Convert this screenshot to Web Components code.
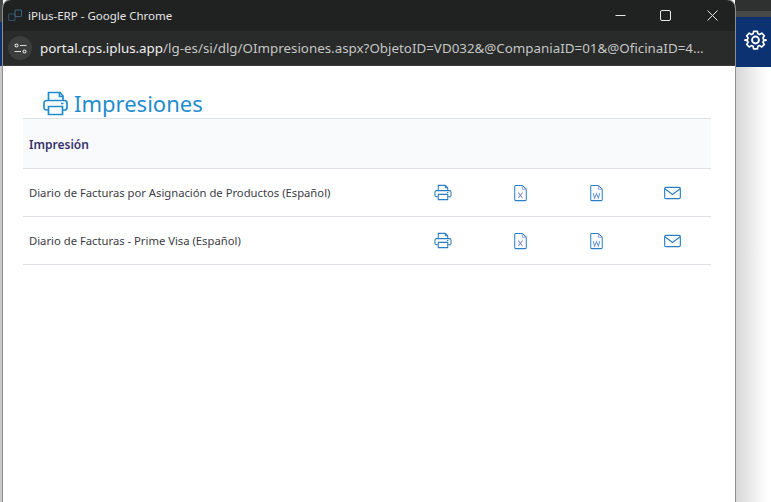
<!DOCTYPE html>
<html lang="es">
<head>
<meta charset="utf-8">
<title>iPlus-ERP</title>
<style>
    html, body { margin: 0; padding: 0; height: 100%; overflow: hidden; background: #fff; }
</style>
</head>
<body>

<x-desktop>
    <x-window title="iPlus-ERP - Google Chrome" host="portal.cps.iplus.app" path="/lg-es/si/dlg/OImpresiones.aspx?ObjetoID=VD032&amp;@CompaniaID=01&amp;@OficinaID=4...">
        <x-heading>Impresiones</x-heading>
        <x-report-table label="Impresión">
            <x-report-row>Diario de Facturas por Asignación de Productos (Español)</x-report-row>
            <x-report-row>Diario de Facturas - Prime Visa (Español)</x-report-row>
        </x-report-table>
    </x-window>
</x-desktop>

<script>
const ICONS = {
    print: `<svg width="18" height="17" viewBox="0 0 19 17" fill="none" stroke="currentColor" stroke-width="1.1">
        <path d="M4.500 6.500V1h7.500l2.500 2.500v3"/><path d="M12 1v2.500h2.500"/>
        <path d="M4.500 13H2.600A1.600 1.600 0 0 1 1 11.400V8.100A1.600 1.600 0 0 1 2.600 6.500h13.800A1.600 1.600 0 0 1 18 8.100v3.300a1.600 1.600 0 0 1-1.600 1.600h-1.900"/>
        <path d="M4.500 10.500h10V16h-10z"/><path d="M13.600 8.500h1.600"/></svg>`,
    excel: `<svg width="13" height="18" viewBox="0 0 14 18" fill="none" stroke="currentColor" stroke-width="1.1">
        <path d="M1.500 .8h7.500l4.200 4.200v11a1.200 1.200 0 0 1-1.200 1.200H1.500A1.200 1.200 0 0 1 .8 16V2A1.200 1.200 0 0 1 1.500 .8z"/>
        <path d="M9 .8V5h4.200" stroke="#a9a3d6"/><path d="M4.600 8.400l4.600 6M9.200 8.400l-4.600 6" stroke="#7d86c8"/></svg>`,
    word: `<svg width="13" height="18" viewBox="0 0 14 18" fill="none" stroke="currentColor" stroke-width="1.1">
        <path d="M1.500 .8h7.500l4.200 4.200v11a1.200 1.200 0 0 1-1.200 1.200H1.500A1.200 1.200 0 0 1 .8 16V2A1.200 1.200 0 0 1 1.500 .8z"/>
        <path d="M9 .8V5h4.200" stroke="#a9a3d6"/><path d="M3.400 9l1.600 5.600L7 9.600l2 5 1.600-5.600" stroke="#6d9ad6"/></svg>`,
    mail: `<svg width="17" height="14" viewBox="0 0 18 14" fill="none" stroke="currentColor" stroke-width="1.2">
        <rect x=".7" y="1" width="16.600" height="12" rx="1.400"/><path d="M1 2.500l8 6 8-6"/></svg>`
};

class Desktop extends HTMLElement {
    constructor() {
        super();
        this.attachShadow({ mode: 'open' });
    }
    connectedCallback() {
        this.shadowRoot.innerHTML = `
            <style>
                :host {
                    display: block;
                    position: relative;
                    width: 771px;
                    height: 502px;
                    overflow: hidden;
                    background: #fff;
                }
                .shade-right {
                    position: absolute;
                    left: 735px; right: 0; top: 67px; bottom: 0;
                    background: linear-gradient(to right, #d6d6d6, #e8e8e8 14px, #f7f7f7 26px, #fff 34px);
                }
                .shade-left {
                    position: absolute;
                    left: 0; width: 3px; top: 66px; bottom: 0;
                    background: #c9c9c9;
                }
                .app-bar {
                    position: absolute;
                    left: 735px; right: 0; top: 17px; height: 50px;
                    background: #0c3272;
                    color: #fff;
                }
                .app-bar svg { position: absolute; left: 9px; top: 11px; }
                .app-top {
                    position: absolute;
                    left: 735px; right: 0; top: 0; height: 17px;
                    background: linear-gradient(#2f3030 0, #2f3030 11px, #474848 11px);
                }
                .left-top {
                    position: absolute;
                    left: 0; width: 3px; top: 0; height: 66px;
                    background: linear-gradient(#4a4a4a 0, #4a4a4a 22px, #0c3272 22px);
                }
            </style>
            <div class="app-top"></div>
            <div class="left-top"></div>
            <div class="app-bar">
                <svg width="23" height="24" viewBox="0 0 24 24" fill="none" stroke="currentColor" stroke-width="2" stroke-linejoin="round">
                    <circle cx="12" cy="12" r="3.600"/>
                    <path d="M9.700 1.500h4.600l.6 3 2.100.9 2.600-1.700 3.100 3.100-1.700 2.600.9 2.100 3 .6v0l-3 .6-.9 2.100 1.700 2.600-3.100 3.100-2.600-1.700-2.100.9-.6 3H9.700l-.6-3-2.100-.9-2.600 1.700-3.100-3.100 1.700-2.600-.9-2.100-3-.6v0l3-.6.9-2.100-1.700-2.600 3.100-3.100 2.600 1.700 2.100-.9z" transform="translate(12 12) scale(.86) translate(-12 -12)"/>
                </svg>
            </div>
            <div class="shade-right"></div>
            <div class="shade-left"></div>
            <slot></slot>
        `;
    }
}

class BrowserWindow extends HTMLElement {
    constructor() {
        super();
        this.attachShadow({ mode: 'open' });
    }
    connectedCallback() {
        const title = this.getAttribute('title');
        const host = this.getAttribute('host');
        const path = this.getAttribute('path');
        this.shadowRoot.innerHTML = `
            <style>
                :host {
                    position: absolute;
                    left: 3px; top: 0;
                    width: 732px;
                    height: 520px;
                    display: flex;
                    flex-direction: column;
                    background: #fff;
                    border-radius: 8px 8px 0 0;
                    overflow: hidden;
                    box-shadow: 0 0 0 1px #8e8e8e;
                    font-family: "Noto Sans", "Open Sans", sans-serif;
                }
                .titlebar {
                    height: 31px;
                    flex: none;
                    display: flex;
                    align-items: center;
                    background: #202222;
                    color: #e6e6e6;
                    font-size: 11.500px;
                }
                .logo { margin: 0 6px 0 5px; display: block; }
                .caption { flex: 1; }
                .ctl { width: 46px; height: 31px; display: flex; align-items: center; justify-content: center; }
                .ctl.max { position: relative; left: -1px; }
                .toolbar {
                    height: 35px;
                    flex: none;
                    display: flex;
                    align-items: center;
                    background: #292a2a;
                    border-bottom: 1px solid #3a3b3b;
                    box-sizing: border-box;
                    font-size: 13.360px;
                    color: #c4c7c5;
                    white-space: nowrap;
                }
                .tune {
                    width: 24px; height: 24px;
                    margin: 0 8px 0 5px;
                    flex: none;
                    border-radius: 50%;
                    background: #3c3d3d;
                    display: flex; align-items: center; justify-content: center;
                }
                .host { color: #f0f0f0; }
                .content { flex: 1; padding: 0 24px 0 20px; min-height: 0; }
            </style>
            <div class="titlebar">
                <svg class="logo" width="14" height="13" viewBox="0 0 14 13" fill="none" stroke="#2f5068" stroke-width="1.100">
                    <rect x=".6" y="5" width="6.500" height="6.500" rx="1"/>
                    <rect x="7" y="1" width="6.500" height="6.500" rx="1" stroke="#38617e"/>
                </svg>
                <span class="caption">${title}</span>
                <span class="ctl"><svg width="11" height="11" viewBox="0 0 11 11"><path d="M.5 5.500h10" stroke="#e8e8e8"/></svg></span>
                <span class="ctl max"><svg width="11" height="11" viewBox="0 0 11 11" fill="none"><rect x=".5" y=".5" width="10" height="10" rx="1.500" stroke="#e8e8e8"/></svg></span>
                <span class="ctl"><svg width="11" height="11" viewBox="0 0 11 11"><path d="M.5 .5l10 10M10.500 .5l-10 10" stroke="#e8e8e8" stroke-width="1"/></svg></span>
            </div>
            <div class="toolbar">
                <span class="tune">
                    <svg width="13" height="11" viewBox="0 0 13 11" fill="none" stroke="#dcdcdc" stroke-width="1.100">
                        <circle cx="2.500" cy="2.500" r="1.500"/><path d="M6 2.500h6.500"/>
                        <circle cx="10.500" cy="8.500" r="1.500"/><path d="M.5 8.500H7"/>
                    </svg>
                </span>
                <span><span class="host">${host}</span>${path}</span>
            </div>
            <div class="content"><slot></slot></div>
        `;
    }
}

class Heading extends HTMLElement {
    constructor() {
        super();
        this.attachShadow({ mode: 'open' });
    }
    connectedCallback() {
        this.shadowRoot.innerHTML = `
            <style>
                :host {
                    display: flex;
                    align-items: center;
                    gap: 6px;
                    height: 52px;
                    box-sizing: border-box;
                    padding: 22px 0 0 20px;
                    color: #1f8ccd;
                    font-size: 22px;
                    line-height: 30px;
                }
            </style>
            <svg width="25" height="25" viewBox="0 0 25 25" fill="none" stroke="currentColor" stroke-width="1.700">
                <path d="M5.500 9.500V1.500h11.500l3 3.500v4.500"/><path d="M16.500 1.500V5.500h3.500"/>
                <path d="M5.500 19H3.500A2.500 2.500 0 0 1 1 16.500v-4.500a2.500 2.500 0 0 1 2.500-2.500h18a2.500 2.500 0 0 1 2.500 2.500v4.500a2.500 2.500 0 0 1-2.500 2.500h-2"/>
                <path d="M5.500 15.500h14v8h-14z"/><path d="M18 12.500h2.500"/>
            </svg>
            <slot></slot>
        `;
    }
}

class ReportTable extends HTMLElement {
    constructor() {
        super();
        this.attachShadow({ mode: 'open' });
    }
    connectedCallback() {
        this.shadowRoot.innerHTML = `
            <style>
                :host {
                    display: block;
                    border-top: 1px solid #dee2e6;
                }
                .head {
                    height: 50px;
                    box-sizing: border-box;
                    display: flex;
                    align-items: center;
                    padding: 1px 0 0 6px;
                    background: #f9fafc;
                    border-bottom: 1px solid #dee2e6;
                    color: #35336b;
                    font-size: 12px;
                    font-weight: 600;
                }
            </style>
            <div class="head">${this.getAttribute('label')}</div>
            <slot></slot>
        `;
    }
}

class ReportRow extends HTMLElement {
    constructor() {
        super();
        this.attachShadow({ mode: 'open' });
    }
    connectedCallback() {
        this.shadowRoot.innerHTML = `
            <style>
                :host {
                    display: grid;
                    grid-template-columns: 381px 78px 76px 77px 75px;
                    align-items: center;
                    height: 47px;
                    border-bottom: 1px solid #dee2e6;
                    color: #3c3c46;
                    font-size: 11.260px;
                }
                .name { padding-left: 6px; white-space: nowrap; }
                .act { display: flex; justify-content: center; color: #2a7fc4; }
                svg { display: block; }
            </style>
            <div class="name"><slot></slot></div>
            <div class="act">${ICONS.print}</div>
            <div class="act">${ICONS.excel}</div>
            <div class="act">${ICONS.word}</div>
            <div class="act">${ICONS.mail}</div>
        `;
    }
}

customElements.define('x-desktop', Desktop);
customElements.define('x-window', BrowserWindow);
customElements.define('x-heading', Heading);
customElements.define('x-report-table', ReportTable);
customElements.define('x-report-row', ReportRow);
</script>
</body>
</html>
